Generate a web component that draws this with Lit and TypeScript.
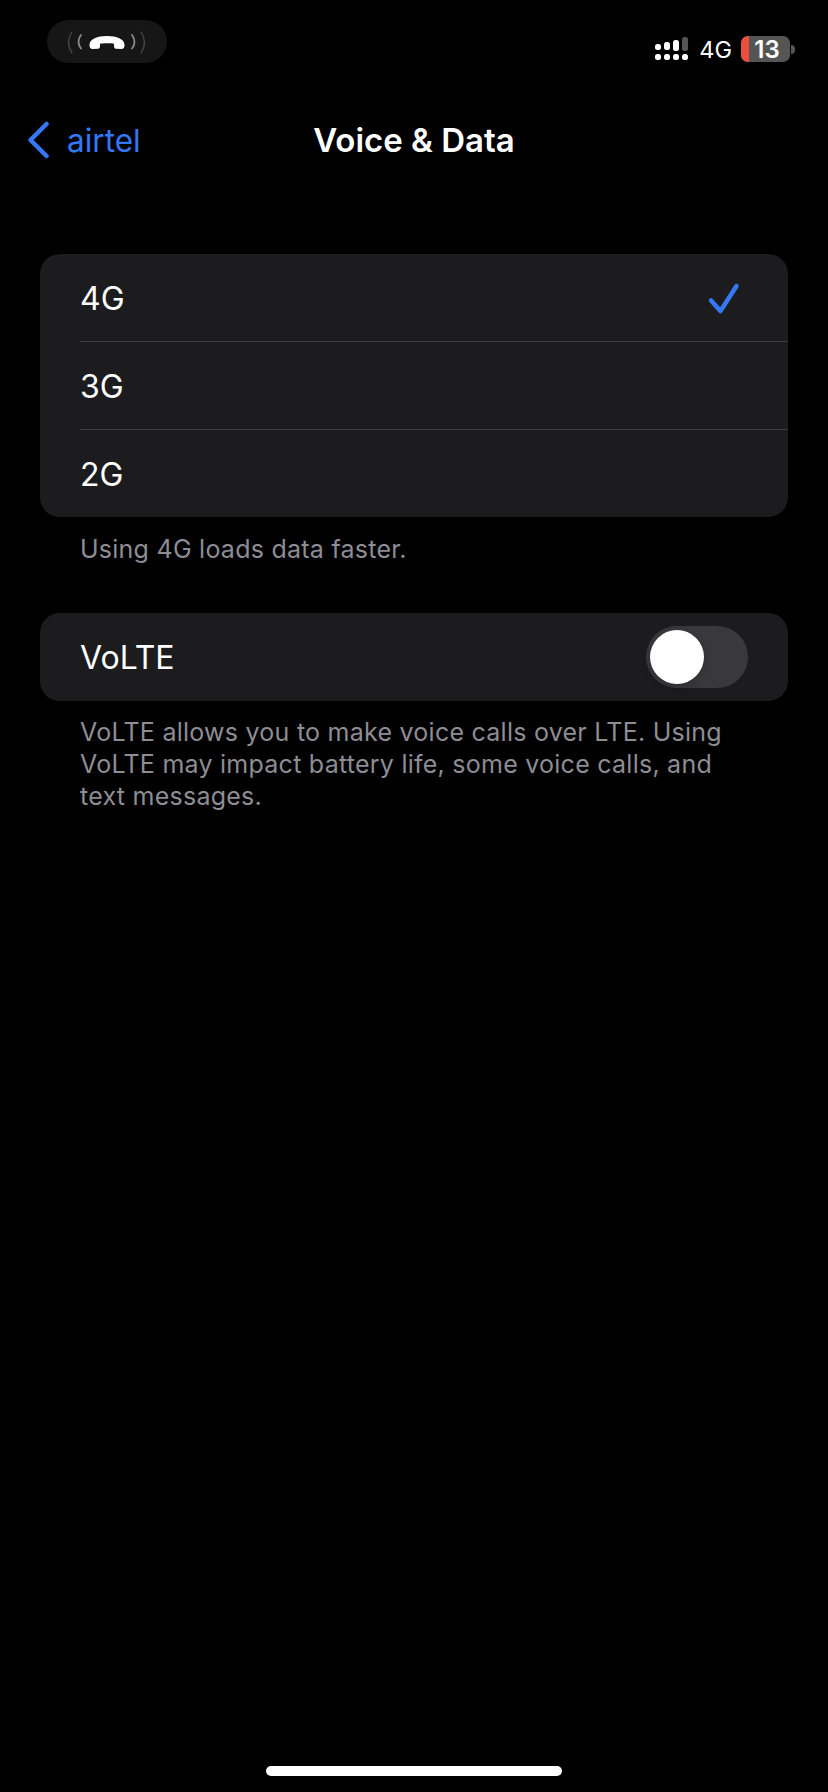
import { LitElement, html, css } from "lit";
import { customElement } from "lit/decorators.js";

const checkIcon = html`<svg class="check" width="34" height="34" viewBox="0 0 34 34">
    <path d="M4 19.500 L13.500 30 L29.500 5" fill="none" stroke="#3478f6" stroke-width="4.500" stroke-linecap="round" stroke-linejoin="round" />
</svg>`;

@customElement("app-root")
export class AppRoot extends LitElement {
    static styles = css`
        :host {
            display: flex;
            flex-direction: column;
            width: 828px;
            height: 1792px;
            background: #000;
            color: #fff;
            font-family: Inter, "Liberation Sans", sans-serif;
        }

        .status {
            display: flex;
            justify-content: space-between;
            flex: none;
            box-sizing: border-box;
            height: 102px;
            padding: 20px 33px 0 47px;
        }

        .call {
            display: block;
            width: 120px;
            height: 43px;
        }

        .indicators {
            display: flex;
            align-items: center;
            height: 26px;
            margin-top: 16px;
        }

        .network {
            font-size: 23.5px;
            line-height: 26px;
            margin: 1px 9px 0 10px;
        }

        .battery {
            display: flex;
            align-items: center;
            justify-content: center;
            position: relative;
            overflow: hidden;
            box-sizing: border-box;
            width: 49px;
            height: 26px;
            padding-left: 3px;
            border-radius: 7px;
            background: #555;
            font-size: 24px;
            font-weight: 600;
        }

        .battery-level {
            position: absolute;
            left: 0;
            top: 0;
            bottom: 0;
            width: 8px;
            background: #eb4e3d;
        }

        .battery span {
            position: relative;
        }

        .cap {
            width: 4px;
            height: 9px;
            margin-left: 1px;
            border-radius: 0 4px 4px 0;
            background: #555;
        }

        .nav {
            display: flex;
            align-items: center;
            position: relative;
            flex: none;
            box-sizing: border-box;
            height: 76px;
            padding-left: 27px;
        }

        .back {
            display: flex;
            align-items: center;
            gap: 17px;
            color: #3478f6;
            font-size: 31.500px;
        }

        .title {
            position: absolute;
            left: 0;
            right: 0;
            text-align: center;
            font-size: 33px;
            font-weight: 600;
        }

        .content {
            flex: 1;
            padding: 76px 40px 0;
        }

        .card {
            overflow: hidden;
            background: #1c1c1e;
            border-radius: 20px;
        }

        .row {
            display: flex;
            align-items: center;
            justify-content: space-between;
            box-sizing: border-box;
            height: 88px;
            padding-left: 40px;
            font-size: 32px;
        }

        .row span {
            padding-top: 1px;
        }

        .divider {
            height: 1px;
            margin-left: 40px;
            background: #3d3d40;
        }

        .row.check-row {
            height: 87px;
        }

        .check {
            margin-right: 47px;
        }

        .switch {
            display: flex;
            align-items: center;
            box-sizing: border-box;
            width: 102px;
            height: 62px;
            margin-right: 40px;
            padding-left: 4px;
            border-radius: 31px;
            background: #39393d;
        }

        .knob {
            width: 54px;
            height: 54px;
            border-radius: 50%;
            background: #fff;
            box-shadow: 0 3px 8px rgba(0, 0, 0, 0.2);
        }

        .note {
            margin: 15px 0 0;
            padding: 0 40px;
            color: #8d8d93;
            font-size: 25px;
            letter-spacing: 0.25px;
            line-height: 32px;
        }

        .note.first {
            margin-top: 16px;
            margin-bottom: 48px;
        }

        .home {
            flex: none;
            align-self: center;
            width: 296px;
            height: 10px;
            margin-bottom: 16px;
            border-radius: 5px;
            background: #fff;
        }
    `;

    row(label: string, selected = false) {
        return html`<div class="row check-row">
            <span>${label}</span>
            ${selected ? checkIcon : null}
        </div>`;
    }

    render() {
        return html`
            <div class="status">
                <svg class="call" viewBox="0 0 120 43">
                    <rect width="120" height="43" rx="21.5" fill="#161616" />
                    <g fill="none" stroke-linecap="round">
                        <path d="M34 15 Q29 22 34 28.500" stroke="#8a8a8a" stroke-width="1.800" />
                        <path d="M25 12 Q18 22.500 25 33" stroke="#4a4a4a" stroke-width="1.200" />
                        <path d="M85 15 Q90 22 85 28.500" stroke="#8a8a8a" stroke-width="1.800" />
                        <path d="M94 12 Q101 22.500 94 33" stroke="#4a4a4a" stroke-width="1.200" />
                    </g>
                    <path
                        d="M42.500 24.500 C43 19 50 16 60 16 C70 16 77 19 77.500 24.500 C77.700 27.500 76.500 29 74.500 29 L69.500 28.800 C67.800 28.700 67 27.800 67 26.200 L67 23.800 C65 23 55 23 53 23.800 L53 26.200 C53 27.800 52.200 28.700 50.500 28.800 L45.500 29 C43.500 29 42.300 27.500 42.500 24.500 Z"
                        fill="#fff"
                    />
                </svg>
                <div class="indicators">
                    <svg width="34" height="24" viewBox="0 0 34 24">
                        <rect x="0" y="7" width="6" height="6" rx="2.500" fill="#fff" />
                        <rect x="9" y="5" width="6" height="8" rx="2.500" fill="#fff" />
                        <rect x="18" y="3" width="6" height="11" rx="2.500" fill="#fff" />
                        <rect x="27" y="0" width="6" height="14" rx="2.500" fill="#555" />
                        <rect x="0" y="17" width="6" height="6" rx="2.500" fill="#fff" />
                        <rect x="9" y="17" width="6" height="6" rx="2.500" fill="#fff" />
                        <rect x="18" y="17" width="6" height="6" rx="2.500" fill="#fff" />
                        <rect x="27" y="17" width="6" height="6" rx="2.500" fill="#fff" />
                    </svg>
                    <span class="network">4G</span>
                    <div class="battery"><div class="battery-level"></div><span>13</span></div>
                    <div class="cap"></div>
                </div>
            </div>
            <div class="nav">
                <div class="back">
                    <svg width="23" height="38" viewBox="0 0 23 38">
                        <path d="M19.500 3 L3.500 19 L19.500 35" fill="none" stroke="#3478f6" stroke-width="4.500" stroke-linecap="round" stroke-linejoin="round" />
                    </svg>
                    <span>airtel</span>
                </div>
                <div class="title">Voice &amp; Data</div>
            </div>
            <div class="content">
                <div class="card">
                    ${this.row("4G", true)}
                    <div class="divider"></div>
                    ${this.row("3G")}
                    <div class="divider"></div>
                    ${this.row("2G")}
                </div>
                <p class="note first">Using 4G loads data faster.</p>
                <div class="card">
                    <div class="row">
                        <span>VoLTE</span>
                        <div class="switch"><div class="knob"></div></div>
                    </div>
                </div>
                <p class="note">
                    VoLTE allows you to make voice calls over LTE. Using VoLTE may impact battery life, some voice calls, and text messages.
                </p>
            </div>
            <div class="home"></div>
        `;
    }
}
